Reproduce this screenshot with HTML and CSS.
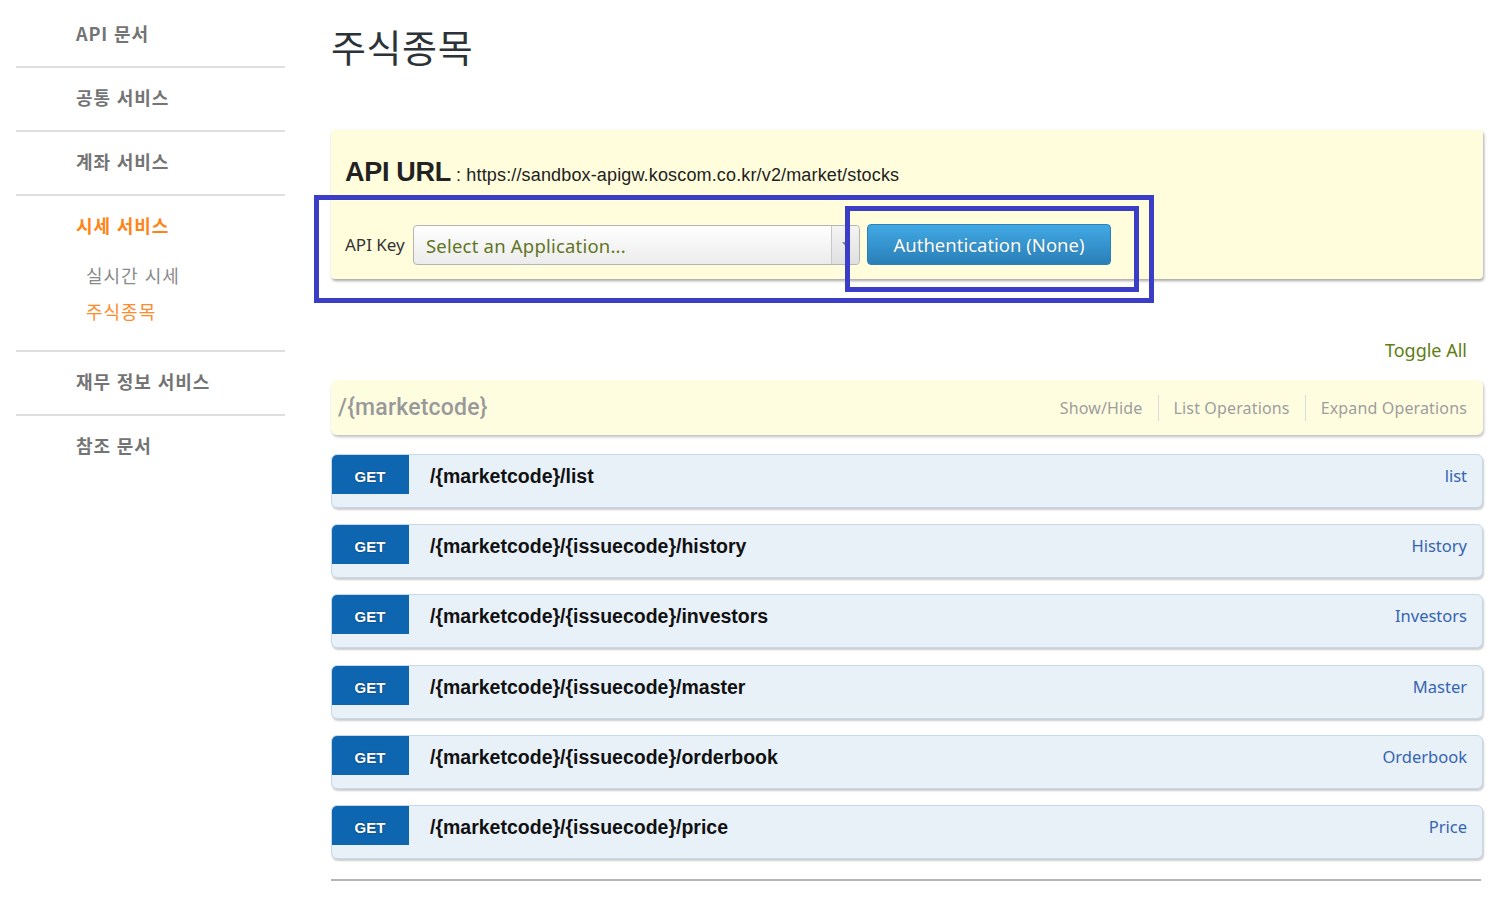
FILE: index.html
```html
<!DOCTYPE html>
<html lang="ko">
<head>
<meta charset="utf-8">
<title>주식종목</title>
<link rel="stylesheet" href="styles.css">
</head>
<body>
<div class="page">
  <aside class="sidebar">
    <ul class="nav">
      <li class="nav-item"><span class="nav-label">API 문서</span></li>
      <li class="nav-item"><span class="nav-label">공통 서비스</span></li>
      <li class="nav-item"><span class="nav-label">계좌 서비스</span></li>
      <li class="nav-item open">
        <span class="nav-label active">시세 서비스</span>
        <ul class="sub">
          <li class="sub-item">실시간 시세</li>
          <li class="sub-item active">주식종목</li>
        </ul>
      </li>
      <li class="nav-item"><span class="nav-label">재무 정보 서비스</span></li>
      <li class="nav-item"><span class="nav-label">참조 문서</span></li>
    </ul>
  </aside>
  <main class="main">
    <h1 class="title">주식종목</h1>
    <section class="api-box">
      <div class="api-url"><span class="api-url-label">API URL</span><span class="api-url-value"> : https://sandbox-apigw.koscom.co.kr/v2/market/stocks</span></div>
      <div class="key-row">
        <span class="key-label">API Key</span>
        <div class="select">
          <span class="select-text">Select an Application...</span>
          <span class="select-arrow"><svg width="8" height="6" viewBox="0 0 8 6"><path d="M0 0 L8 0 L4 5 Z" fill="#888"/></svg></span>
        </div>
        <button class="auth-btn">Authentication (None)</button>
      </div>
    </section>
    <div class="toggle-row"><span class="toggle">Toggle All</span></div>
    <div class="resource">
      <span class="resource-name">/{marketcode}</span>
      <ul class="resource-links">
        <li>Show/Hide</li>
        <li>List Operations</li>
        <li>Expand Operations</li>
      </ul>
    </div>
    <ul class="ops">
      <li class="op"><span class="method">GET</span><span class="path">/{marketcode}/list</span><span class="summary">list</span></li>
      <li class="op"><span class="method">GET</span><span class="path">/{marketcode}/{issuecode}/history</span><span class="summary">History</span></li>
      <li class="op"><span class="method">GET</span><span class="path">/{marketcode}/{issuecode}/investors</span><span class="summary">Investors</span></li>
      <li class="op"><span class="method">GET</span><span class="path">/{marketcode}/{issuecode}/master</span><span class="summary">Master</span></li>
      <li class="op"><span class="method">GET</span><span class="path">/{marketcode}/{issuecode}/orderbook</span><span class="summary">Orderbook</span></li>
      <li class="op"><span class="method">GET</span><span class="path">/{marketcode}/{issuecode}/price</span><span class="summary">Price</span></li>
    </ul>
    <hr class="end-rule">
  </main>
</div>
<div class="mark mark-outer"></div>
<div class="mark mark-inner"></div>
</body>
</html>
```
FILE: styles.css
```css
* { box-sizing: border-box; }
html, body { margin: 0; padding: 0; background: #fff; }
body { font-family: "Noto Sans CJK KR", "Noto Sans", sans-serif; color: #333; }
ul { list-style: none; margin: 0; padding: 0; }

.page { display: flex; align-items: flex-start; }

.sidebar { width: 331px; padding-left: 16px; flex: none; }
.nav { width: 269px; padding-top: 4px; }
.nav-item { border-bottom: 2px solid #dedede; }
.nav-item:last-child { border-bottom: none; }
.nav-label { display: block; height: 62px; line-height: 58px; padding-left: 60px; font-size: 18px; font-weight: 700; color: #747474; letter-spacing: 0.9px; }
.nav-label.active { color: #ff8418; }
.sub { padding-bottom: 20px; margin-top: 0; }
.sub-item { height: 36px; line-height: 34px; padding-left: 70px; font-size: 18px; color: #8a8a8a; letter-spacing: 1px; }
.sub-item.active { color: #ff8b2a; }

.main { width: 1152px; flex: none; }
.title { margin: 20px 0 0 0; height: 110px; font-size: 38px; font-weight: 400; line-height: 52px; color: #2c3338; letter-spacing: 0.6px; }

.api-box { background: #fffddc; border-radius: 4px; box-shadow: 1px 2px 3px rgba(0,0,0,0.35); padding: 27px 14px 14px 14px; }
.api-url { height: 30px; line-height: 30px; font-family: "Liberation Sans", Arial, sans-serif; color: #222; }
.api-url-label { font-size: 27px; font-weight: 700; letter-spacing: -0.3px; }
.api-url-value { font-size: 18px; letter-spacing: 0.15px; }
.key-row { display: flex; align-items: center; margin-top: 37px; height: 41px; }
.key-label { font-family: "Noto Sans", sans-serif; font-size: 17px; color: #333; width: 68px; letter-spacing: 0; }
.select { display: flex; align-items: center; width: 447px; height: 40px; border: 1px solid #b4b4b4; border-radius: 4px; background: linear-gradient(#ffffff, #ececec); margin-top: 1px; }
.select-text { flex: 1; padding-left: 12px; font-family: "Noto Sans", sans-serif; font-size: 18.5px; color: #62751f; letter-spacing: 0.2px; }
.select-arrow { width: 28px; height: 100%; border-left: 1px solid #c8c8c8; display: flex; align-items: center; justify-content: center; background: linear-gradient(#f4f4f4, #e0e0e0); border-radius: 0 4px 4px 0; }
.auth-btn { margin-left: 7px; width: 244px; height: 41px; border: 1px solid #2c7fb7; border-radius: 4px; background: linear-gradient(#41a9e4, #2a7fb8); color: #fff; font-family: "Noto Sans", sans-serif; font-size: 18.5px; padding: 0; text-shadow: 0 0 1px rgba(0,0,0,0.3); }

.toggle-row { display: flex; justify-content: flex-end; margin-top: 57px; height: 28px; line-height: 28px; padding-right: 16px; }
.toggle { font-family: "Noto Sans", sans-serif; font-size: 18px; color: #5e7d12; }

.resource { display: flex; align-items: center; justify-content: space-between; margin-top: 16px; height: 55px; background: #fffde0; border-radius: 6px; box-shadow: 1px 2px 3px rgba(0,0,0,0.25); padding: 0 16px 0 7px; }
.resource-name { font-family: Roboto, sans-serif; font-size: 23px; font-weight: 500; color: #999; letter-spacing: 0.2px; }
.resource-links { display: flex; align-items: center; }
.resource-links li { font-family: "Noto Sans", sans-serif; font-size: 16px; color: #9d9d9d; padding: 0 15px; border-left: 1px solid #dcdcdc; line-height: 26px; letter-spacing: 0.15px; }
.resource-links li:first-child { border-left: none; }
.resource-links li:last-child { padding-right: 0; }

.ops { margin-top: 19px; display: flex; flex-direction: column; gap: 16.2px; }
.op { display: flex; align-items: flex-start; height: 54px; background: #e8f0f8; border: 1px solid #c5d9ed; border-radius: 6px; box-shadow: 1px 2px 2px rgba(0,0,0,0.2); overflow: hidden; }
.method { flex: none; width: 78px; height: 40px; margin: -1px 0 0 -1px; background: #0f66b0; color: #fff; font-family: "Liberation Sans", Arial, sans-serif; font-weight: 700; font-size: 15px; line-height: 46px; text-align: center; text-shadow: 0 0 2px rgba(0,0,0,0.5); border-radius: 6px 0 0 0; }
.path { flex: 1; padding-left: 21px; font-family: "Liberation Sans", Arial, sans-serif; font-weight: 700; font-size: 19.5px; line-height: 43px; color: #111; }
.summary { padding-right: 15px; font-family: "Noto Sans", sans-serif; font-size: 16.5px; line-height: 42px; color: #3565b0; }

.end-rule { margin: 20px 2px 0 0; border: none; border-top: 2px solid #b5b5b5; height: 0; }

.mark { position: absolute; border: 5px solid #3b3dc6; pointer-events: none; }
.mark-outer { left: 314px; top: 195px; width: 840px; height: 108px; }
.mark-inner { left: 845px; top: 206px; width: 294px; height: 86px; }
```
